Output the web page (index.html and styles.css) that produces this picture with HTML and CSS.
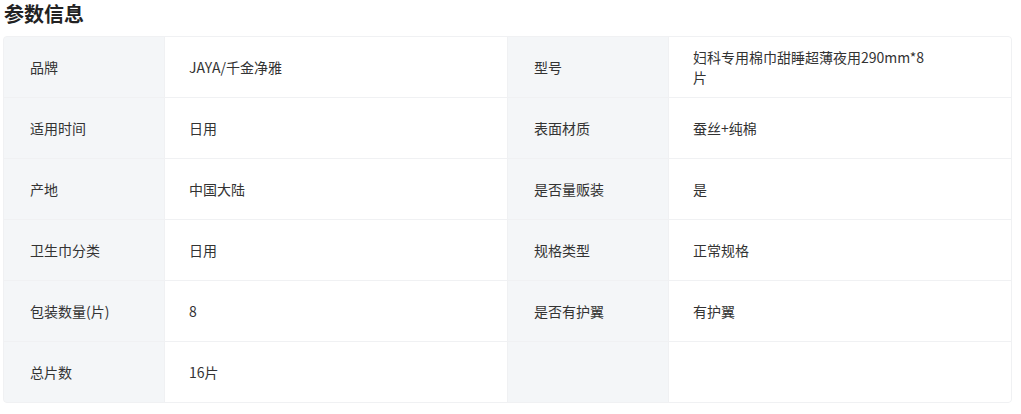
FILE: index.html
```html
<!DOCTYPE html>
<html lang="zh-CN">
<head>
<meta charset="utf-8">
<title>参数信息</title>
<link rel="stylesheet" href="styles.css">
</head>
<body>
<h2 class="title">参数信息</h2>
<div class="params">
  <div class="label">品牌</div><div class="value">JAYA/千金净雅</div>
  <div class="label">型号</div><div class="value"><span class="wrap">妇科专用棉巾甜睡超薄夜用290mm*8片</span></div>
  <div class="label">适用时间</div><div class="value">日用</div>
  <div class="label">表面材质</div><div class="value">蚕丝+纯棉</div>
  <div class="label">产地</div><div class="value">中国大陆</div>
  <div class="label">是否量贩装</div><div class="value">是</div>
  <div class="label">卫生巾分类</div><div class="value">日用</div>
  <div class="label">规格类型</div><div class="value">正常规格</div>
  <div class="label">包装数量(片)</div><div class="value">8</div>
  <div class="label">是否有护翼</div><div class="value">有护翼</div>
  <div class="label">总片数</div><div class="value">16片</div>
  <div class="label"></div><div class="value"></div>
</div>
</body>
</html>
```
FILE: styles.css
```css
html, body {
  margin: 0;
  padding: 0;
  background: #fff;
}
body {
  font-family: "Noto Sans CJK SC", "Microsoft YaHei", sans-serif;
  color: #333;
  padding: 0 0 0 3px;
}
.title {
  margin: 0 0 11px 1px;
  padding-top: 2px;
  font-size: 20px;
  line-height: 23px;
  font-weight: 700;
  color: #222;
}
.params {
  display: grid;
  grid-template-columns: 160px 342px 160px 342px;
  grid-auto-rows: 60px;
  gap: 1px;
  width: 1007px;
  background: #f0f1f3;
  border: 1px solid #f0f1f3;
  border-radius: 4px;
  overflow: hidden;
}
.label, .value {
  display: flex;
  align-items: center;
  font-size: 14px;
  line-height: 20px;
}
.label {
  background: #f4f6f8;
  padding-left: 26px;
}
.value {
  background: #fff;
  padding-left: 24px;
}
.wrap {
  max-width: 240px;
}
```
